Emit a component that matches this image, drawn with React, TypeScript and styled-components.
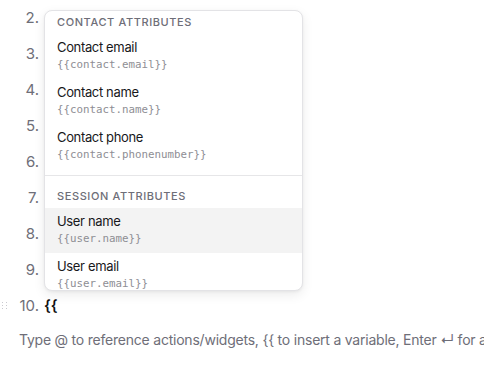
import React from "react";
import styled, { createGlobalStyle } from "styled-components";

const Global = createGlobalStyle`
  html, body { margin: 0; padding: 0; background: #ffffff; }
  body { width: 484px; height: 367px; overflow: hidden; font-family: Inter, "Noto Sans", sans-serif; }
`;

const Page = styled.div`
  position: relative;
  width: 484px;
  height: 367px;
  overflow: hidden;
`;

const Lines = styled.ol`
  list-style: none;
  margin: -1px 0 0 0;
  padding: 0;
  display: flex;
  flex-direction: column;
`;

const Line = styled.li`
  position: relative;
  height: 36px;
  display: flex;
  align-items: center;
`;

const Num = styled.span`
  width: 39px;
  text-align: right;
  font-size: 15px;
  color: #6e6e78;
  flex: none;
`;

const Content = styled.span`
  margin-left: 5px;
  font-size: 15px;
  font-weight: 600;
  color: #111;
`;

const Handle = styled.span`
  position: absolute;
  left: 2px;
  top: 15px;
  width: 6px;
  height: 7px;
  display: grid;
  grid-template-columns: repeat(2, 2px);
  grid-auto-rows: 2px;
  column-gap: 2px;
  row-gap: 1px;
  & > i { background: #c9c9cf; width: 1px; height: 1px; }
`;

const Hint = styled.p`
  margin: 8px 0 0 19px;
  white-space: nowrap;
  font-size: 14px;
  letter-spacing: -0.22px;
  color: #6e6e78;
`;

const Popup = styled.div`
  position: absolute;
  left: 44px;
  top: 10px;
  width: 257px;
  height: 279px;
  border: 1px solid #e3e3e6;
  border-radius: 8px;
  background: #fff;
  box-shadow: 0 4px 12px rgba(0, 0, 0, 0.08), 0 1px 3px rgba(0, 0, 0, 0.05);
  overflow: hidden;
`;

const Group = styled.div<{ $divided?: boolean }>`
  display: flex;
  flex-direction: column;
  padding-bottom: 6px;
  border-top: ${(p) => (p.$divided ? "1px solid #e6e6e8" : "none")};
`;

const GroupTitle = styled.div<{ $top: number; $bottom: number }>`
  padding: ${(p) => p.$top}px 12px ${(p) => p.$bottom}px;
  font-size: 11px;
  line-height: 12px;
  font-weight: 500;
  letter-spacing: 0.6px;
  text-transform: uppercase;
  color: #6e6e78;
`;

const Item = styled.div<{ $active?: boolean }>`
  padding: 5px 12px 6px;
  height: 34px;
  display: flex;
  flex-direction: column;
  background: ${(p) => (p.$active ? "#f3f3f3" : "transparent")};
`;

const Label = styled.span`
  font-size: 13px;
  line-height: 17px;
  letter-spacing: -0.35px;
  color: #18181b;
`;

const Code = styled.span`
  font-family: "DejaVu Sans Mono", monospace;
  font-size: 10.8px;
  line-height: 17px;
  color: #8e8e94;
`;

const contact = [
  { label: "Contact email", code: "{{contact.email}}" },
  { label: "Contact name", code: "{{contact.name}}" },
  { label: "Contact phone", code: "{{contact.phonenumber}}" },
];
const session = [
  { label: "User name", code: "{{user.name}}", active: true },
  { label: "User email", code: "{{user.email}}" },
];

export default function App() {
  const nums = [2, 3, 4, 5, 6, 7, 8, 9];
  return (
    <Page>
      <Global />
      <Lines>
        {nums.map((n) => (
          <Line key={n}>
            <Num>{n}.</Num>
          </Line>
        ))}
        <Line>
          <Handle>
            {Array.from({ length: 6 }).map((_, i) => (
              <i key={i} />
            ))}
          </Handle>
          <Num>10.</Num>
          <Content>{"{{"}</Content>
        </Line>
      </Lines>
      <Hint>Type @ to reference actions/widgets, {"{{"} to insert a variable, Enter ↵ for a new line</Hint>
      <Popup>
        <Group>
          <GroupTitle $top={5} $bottom={6}>Contact attributes</GroupTitle>
          {contact.map((c) => (
            <Item key={c.label}>
              <Label>{c.label}</Label>
              <Code>{c.code}</Code>
            </Item>
          ))}
        </Group>
        <Group $divided>
          <GroupTitle $top={14} $bottom={6}>Session attributes</GroupTitle>
          {session.map((c) => (
            <Item key={c.label} $active={c.active}>
              <Label>{c.label}</Label>
              <Code>{c.code}</Code>
            </Item>
          ))}
        </Group>
      </Popup>
    </Page>
  );
}
